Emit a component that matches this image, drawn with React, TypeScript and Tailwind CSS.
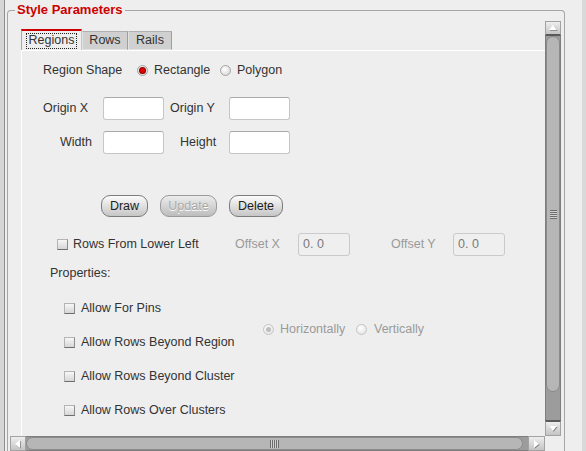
import React from "react";

const T = "text-[12.5px] text-[#333333] leading-[15px] whitespace-nowrap";
const G = "text-[12.5px] text-[#9a9a9a] leading-[15px] whitespace-nowrap";

function Radio({ checked, disabled }: { checked?: boolean; disabled?: boolean }) {
  return (
    <span
      className={
        "w-[11px] h-[11px] rounded-full border shrink-0 flex items-center justify-center " +
        (disabled
          ? "border-[#c4c4c4] bg-[radial-gradient(circle_at_40%_35%,#ffffff,#dedede)]"
          : "border-[#a4a4a4] bg-[radial-gradient(circle_at_40%_35%,#ffffff,#d0d0d0)]")
      }
    >
      {checked && (
        <span
          className={
            "w-[5px] h-[5px] rounded-full " +
            (disabled ? "bg-[#bdbdbd]" : "bg-[#e00000] shadow-[0_0_0_1px_#8a0000]")
          }
        />
      )}
    </span>
  );
}

function Check() {
  return (
    <span className="w-[11px] h-[11px] shrink-0 border border-[#b4b4b4] border-b-[#6e6e6e] border-r-[#8e8e8e] bg-gradient-to-b from-[#f7f7f7] to-[#d6d6d6]" />
  );
}

function Input({ w }: { w: string }) {
  return (
    <span className={w + " h-[23px] shrink-0 bg-white border border-[#c6c6c6] border-t-[#a9a9a9] rounded-[3px]"} />
  );
}

function DisInput({ w, value }: { w: string; value: string }) {
  return (
    <span
      className={
        w +
        " h-[23px] shrink-0 bg-[#efefef] border border-[#cacaca] rounded-[3px] flex items-center pl-[4px] text-[12.5px] text-[#7a7a7a] leading-[15px] whitespace-pre"
      }
    >
      {value}
    </span>
  );
}

function Btn({ w, label, disabled }: { w: string; label: string; disabled?: boolean }) {
  return (
    <span
      className={
        w +
        " h-[22px] rounded-[9px] border flex items-center justify-center text-[12.5px] leading-[15px] " +
        (disabled
          ? "border-[#9a9a9a] bg-gradient-to-b from-[#ececec] to-[#bdbdbd] text-[#a8a8a8] [text-shadow:0_1px_0_#ffffff]"
          : "border-[#7c7c7c] bg-gradient-to-b from-[#fbfbfb] to-[#c6c6c6] text-[#222222]")
      }
    >
      {label}
    </span>
  );
}

function Arrow({ dir }: { dir: "up" | "down" | "left" | "right" }) {
  const pts: Record<string, string> = {
    up: "1,7 9,7 5,2",
    down: "1,2 9,2 5,7",
    left: "7,1 7,9 2,5",
    right: "2,1 2,9 7,5",
  };
  return (
    <svg width="10" height="10" viewBox="0 0 10 10">
      <polygon points={pts[dir]} fill="#7a7a7a" transform="translate(0.7,0.7)" />
      <polygon points={pts[dir]} fill="#ffffff" />
    </svg>
  );
}

function ArrowBtn({ dir, cls }: { dir: "up" | "down" | "left" | "right"; cls: string }) {
  return (
    <div
      className={
        cls +
        " shrink-0 flex items-center justify-center bg-gradient-to-b from-[#eeeeee] to-[#c4c4c4] border border-[#a2a2a2]"
      }
    >
      <Arrow dir={dir} />
    </div>
  );
}

export default function App() {
  return (
    <div className="w-[586px] h-[451px] bg-[#eeeeee] flex overflow-hidden font-['Liberation_Sans',Arial,sans-serif]">
      {/* left edge */}
      <div className="w-[4px] bg-[#d6d6d6] shrink-0" />
      <div className="w-[1px] bg-[#8e8e8e] shrink-0" />
      <div className="w-[2px] shrink-0" />

      {/* group box */}
      <div className="w-[558px] shrink-0 mt-[10px] border-l border-t border-r border-[#a6a6a6] rounded-t-[4px] relative">
        <span className="absolute left-[7px] top-[-9px] px-[2px] bg-[#eeeeee] text-[13px] font-bold text-[#cc0000] leading-[16px]">
          Style Parameters
        </span>
        <div className="pt-[10px] pl-[2px] pr-[3px] flex flex-col">
          <div className="flex h-[415px]">
            {/* viewport */}
            <div className="w-[535px] overflow-hidden flex flex-col">
              {/* tabs */}
              <div className="mt-[8px] ml-[11px] flex items-end h-[21px] shrink-0">
                <div className="w-[61px] h-[21px] border-t-2 border-t-[#cc0000] border-l border-l-[#a8a8a8] border-r border-r-[#c8c8c8] bg-[#eeeeee] flex items-center justify-center">
                  <span className={T + " border border-dotted border-[#222] px-[2px] h-[16px] flex items-center"}>
                    Regions
                  </span>
                </div>
                <div className="w-[46px] h-[19px] bg-[#d0d0d0] border border-[#e2e2e2] border-r-[#9e9e9e] border-t-[#b0b0b0] flex items-center justify-center">
                  <span className={T}>Rows</span>
                </div>
                <div className="w-[44px] h-[19px] bg-[#d0d0d0] border border-[#e2e2e2] border-r-[#9e9e9e] border-t-[#b0b0b0] flex items-center justify-center">
                  <span className={T}>Rails</span>
                </div>
              </div>
              {/* panel */}
              <div className="ml-[11px] flex-1 border-t border-l border-white flex flex-col">
                <div className="mt-[9px] h-[20px] flex items-center pl-[21px]">
                  <span className={T + " w-[94px]"}>Region Shape</span>
                  <span className="w-[83px] flex items-center">
                    <Radio checked />
                    <span className={T + " ml-[6px]"}>Rectangle</span>
                  </span>
                  <span className="flex items-center">
                    <Radio />
                    <span className={T + " ml-[6px]"}>Polygon</span>
                  </span>
                </div>

                <div className="mt-[17px] h-[23px] flex items-center pl-[21px]">
                  <span className={T + " w-[60px]"}>Origin X</span>
                  <Input w="w-[61px]" />
                  <span className={T + " ml-[6px] w-[59px]"}>Origin Y</span>
                  <Input w="w-[61px]" />
                </div>

                <div className="mt-[11px] h-[23px] flex items-center pl-[38px]">
                  <span className={T + " w-[43px]"}>Width</span>
                  <Input w="w-[61px]" />
                  <span className={T + " ml-[16px] w-[49px]"}>Height</span>
                  <Input w="w-[61px]" />
                </div>

                <div className="mt-[41px] h-[22px] flex pl-[79px] gap-[12px]">
                  <Btn w="w-[47px]" label="Draw" />
                  <Btn w="w-[57px]" label="Update" disabled />
                  <Btn w="w-[54px]" label="Delete" />
                </div>

                <div className="mt-[16px] h-[23px] flex items-center pl-[35px]">
                  <span className="w-[178px] flex items-center">
                    <Check />
                    <span className={T + " ml-[5px]"}>Rows From Lower Left</span>
                  </span>
                  <span className={G + " w-[63px]"}>Offset X</span>
                  <DisInput w="w-[52px]" value="0. 0" />
                  <span className={G + " ml-[41px] w-[62px]"}>Offset Y</span>
                  <DisInput w="w-[52px]" value="0. 0" />
                </div>

                <div className="mt-[9px] h-[16px] flex items-center pl-[28px]">
                  <span className={T}>Properties:</span>
                </div>

                <div className="mt-[17px] flex pl-[42px]">
                  <div className="w-[199px] flex flex-col gap-[14px]">
                    {[
                      "Allow For Pins",
                      "Allow Rows Beyond Region",
                      "Allow Rows Beyond Cluster",
                      "Allow Rows Over Clusters",
                    ].map((t) => (
                      <div key={t} className="h-[20px] flex items-center">
                        <Check />
                        <span className={T + " ml-[6px]"}>{t}</span>
                      </div>
                    ))}
                  </div>
                  <div className="mt-[21px] h-[20px] flex items-center">
                    <span className="w-[93px] flex items-center">
                      <Radio checked disabled />
                      <span className={G + " ml-[6px]"}>Horizontally</span>
                    </span>
                    <span className="flex items-center">
                      <Radio disabled />
                      <span className={G + " ml-[7px]"}>Vertically</span>
                    </span>
                  </div>
                </div>
              </div>
            </div>

            {/* vertical scrollbar */}
            <div className="w-[16px] flex flex-col shrink-0">
              <ArrowBtn dir="up" cls="h-[15px] border-b-2 border-b-[#5a5a5a]" />
              <div className="flex-1 flex flex-col bg-[#9c9c9c] border-x border-[#7e7e7e]">
                <div className="h-[356px] rounded-[7px] bg-[#b6b6b6] border border-[#8a8a8a] flex items-center justify-center">
                  <div className="flex flex-col">
                    <span className="w-[7px] h-[1px] bg-[#6c6c6c]" />
                    <span className="w-[7px] h-[1px] bg-[#d2d2d2]" />
                    <span className="w-[7px] h-[1px] bg-[#6c6c6c]" />
                    <span className="w-[7px] h-[1px] bg-[#d2d2d2]" />
                    <span className="w-[7px] h-[1px] bg-[#6c6c6c]" />
                    <span className="w-[7px] h-[1px] bg-[#d2d2d2]" />
                    <span className="w-[7px] h-[1px] bg-[#6c6c6c]" />
                    <span className="w-[7px] h-[1px] bg-[#d2d2d2]" />
                    <span className="w-[7px] h-[1px] bg-[#6c6c6c]" />
                  </div>
                </div>
              </div>
              <ArrowBtn dir="down" cls="h-[16px] border-t-2 border-t-[#5a5a5a]" />
            </div>
          </div>

          {/* horizontal scrollbar */}
          <div className="flex h-[15px]">
            <ArrowBtn dir="left" cls="w-[16px] h-[15px]" />
            <div className="w-[519px] h-[15px] flex bg-[#9c9c9c] border-y border-[#7e7e7e]">
              <div className="w-[497px] h-full rounded-[7px] bg-[#b6b6b6] border border-[#8a8a8a] flex items-center pl-[243px]">
                <div className="flex h-[8px]">
                  <span className="w-[1px] h-full bg-[#6c6c6c]" />
                  <span className="w-[1px] h-full bg-[#d2d2d2]" />
                  <span className="w-[1px] h-full bg-[#6c6c6c]" />
                  <span className="w-[1px] h-full bg-[#d2d2d2]" />
                  <span className="w-[1px] h-full bg-[#6c6c6c]" />
                  <span className="w-[1px] h-full bg-[#d2d2d2]" />
                  <span className="w-[1px] h-full bg-[#6c6c6c]" />
                  <span className="w-[1px] h-full bg-[#d2d2d2]" />
                  <span className="w-[1px] h-full bg-[#6c6c6c]" />
                </div>
              </div>
            </div>
            <ArrowBtn dir="right" cls="w-[17px] h-[15px] -ml-[17px]" />
            <div className="w-[16px]" />
          </div>
        </div>
      </div>

      <div className="w-[17px] shrink-0" />
      <div className="w-[4px] bg-[#d9d9d9] shrink-0" />
    </div>
  );
}
